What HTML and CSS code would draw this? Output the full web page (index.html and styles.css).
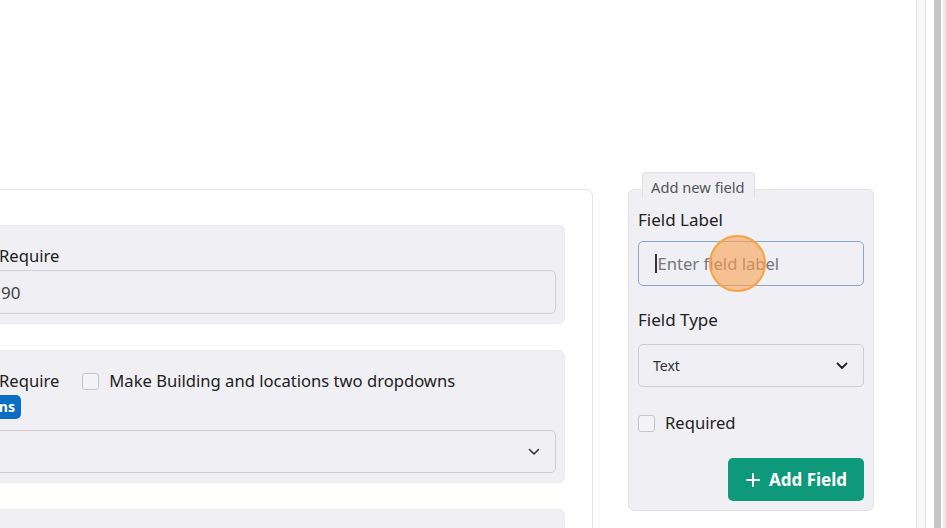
FILE: index.html
```html
<!DOCTYPE html>
<html lang="en">
<head>
  <meta charset="UTF-8" />
  <meta name="viewport" content="width=device-width, initial-scale=1.0" />
  <title>Form Builder</title>
  <link rel="stylesheet" href="styles.css">
</head>
<body>
  <div class="page">
    <div class="content">

      <!-- Existing fields -->
      <section class="fields">
        <div class="field-card">
          <label class="check-row">
            <span class="box"></span>
            <span>Require</span>
          </label>
          <div class="input">90</div>
        </div>

        <div class="field-card">
          <div class="check-row">
            <label class="check-row">
              <span class="box"></span>
              <span>Require</span>
            </label>
            <label class="check-row spaced">
              <span class="box"></span>
              <span>Make Building and locations two dropdowns</span>
            </label>
          </div>
          <div class="badge-row">
            <span class="badge">Edit Locations</span>
          </div>
          <div class="select wide">
            <span></span>
            <svg class="chevron" viewBox="0 0 12 8" width="12" height="8"><path d="M1.5 1.5 6 6l4.5-4.5" fill="none" stroke="#333" stroke-width="1.6" stroke-linecap="round" stroke-linejoin="round"/></svg>
          </div>
        </div>

        <div class="field-card"></div>
      </section>

      <!-- Add new field -->
      <aside class="new-field">
        <div class="tab">Add new field</div>
        <div class="panel">
          <div class="label">Field Label</div>
          <div class="input focused">
            <span class="caret"></span>
            <span class="placeholder">Enter field label</span>
            <span class="pointer"></span>
          </div>

          <div class="label type">Field Type</div>
          <div class="select">
            <span>Text</span>
            <svg class="chevron" viewBox="0 0 12 8" width="12" height="8"><path d="M1.5 1.5 6 6l4.5-4.5" fill="none" stroke="#222" stroke-width="1.8" stroke-linecap="round" stroke-linejoin="round"/></svg>
          </div>

          <label class="check-row required">
            <span class="box"></span>
            <span>Required</span>
          </label>

          <div class="actions">
            <button class="add-btn">
              <svg viewBox="0 0 14 14" width="14" height="14"><path d="M7 1v12M1 7h12" stroke="#fff" stroke-width="2" stroke-linecap="round"/></svg>
              Add Field
            </button>
          </div>
        </div>
      </aside>
    </div>

    <div class="gutter">
      <div class="track"></div>
      <div class="thumb"></div>
    </div>
  </div>
</body>
</html>
```

FILE: styles.css
```css
* {
  box-sizing: border-box;
}
body {
  margin: 0;
  background: #fff;
  color: #222;
  font-family: "Noto Sans", "Liberation Sans", sans-serif;
  overflow: hidden;
}
.page {
  display: flex;
  height: 528px;
}
.content {
  flex: 1;
  display: flex;
  align-items: flex-start;
  padding-top: 172px;
  overflow: hidden;
}

/* left column with the existing fields */
.fields {
  flex: none;
  width: 643px;
  margin-left: -50px;
  margin-top: 17px;
  padding: 35px 27px 0 12px;
  border: 1px solid #e4e4e9;
  border-radius: 7px;
  background: #fff;
  display: flex;
  flex-direction: column;
  gap: 26px;
  height: 400px;
}
.field-card {
  background: #f0f0f4;
  border: 1px solid #ebebf0;
  border-radius: 6px;
  padding: 19px 8px 9px 8px;
  min-height: 60px;
}
.check-row {
  display: flex;
  align-items: center;
  gap: 10px;
  font-size: 16.6px;
  line-height: 22px;
}
.check-row.spaced {
  margin-left: 13px;
}
.box {
  width: 17px;
  height: 17px;
  border: 1.5px solid #c4c4ca;
  border-radius: 3px;
  background: #f4f4f7;
  flex: none;
}
.input {
  margin-top: 3px;
  height: 44px;
  border: 1px solid #cfcfd6;
  border-radius: 5px;
  background: #efeff4;
  display: flex;
  align-items: center;
  padding-left: 28px;
  font-size: 17px;
  color: #444;
}
.badge-row {
  margin-top: 3px;
  height: 24px;
}
.badge {
  display: inline-block;
  margin-left: -63px;
  height: 24px;
  line-height: 24px;
  padding: 0 6px 0 8px;
  border-radius: 5px;
  background: #0b6fc1;
  color: #fff;
  font-weight: 700;
  font-size: 14px;
}
.select {
  height: 43px;
  border: 1px solid #cdcdd4;
  border-radius: 5px;
  background: #f0f0f4;
  display: flex;
  align-items: center;
  justify-content: space-between;
  padding: 0 15px 0 14px;
  font-size: 14px;
  color: #333;
}
.select.wide {
  margin-top: 11px;
  padding-right: 15px;
}

/* add new field panel */
.new-field {
  flex: none;
  width: 246px;
  margin-left: 35px;
}
.tab {
  position: relative;
  z-index: 1;
  width: fit-content;
  margin-left: 14px;
  margin-bottom: -9px;
  padding: 5px 9px 2px 8px;
  background: #efeff4;
  border: 1px solid #e0e0e6;
  border-bottom: 0;
  border-radius: 4px 4px 0 0;
  font-size: 14.7px;
  line-height: 18px;
  color: #555;
}
.panel {
  background: #efeff4;
  border: 1px solid #e0e0e6;
  border-radius: 6px;
  padding: 19px 9px 9px 9px;
}
.label {
  font-size: 17px;
  line-height: 22px;
  color: #222;
}
.label.type {
  margin-top: 23px;
}
.panel .input {
  position: relative;
  margin-top: 10px;
  height: 45px;
  border-color: #8aa6cb;
  border-width: 1.5px;
  padding-left: 16px;
  color: #777;
  font-size: 16.6px;
}
.caret {
  width: 1.5px;
  height: 19px;
  background: #333;
  margin-right: 1px;
}
.pointer {
  position: absolute;
  left: 70px;
  top: -7px;
  width: 57px;
  height: 57px;
  border-radius: 50%;
  border: 2px solid #f6a347;
  background: rgba(248, 160, 80, 0.6);
}
.panel .select {
  margin-top: 13px;
}
.required {
  margin-top: 25px;
}
.actions {
  display: flex;
  justify-content: flex-end;
  margin-top: 24px;
}
.add-btn {
  display: flex;
  align-items: center;
  gap: 9px;
  height: 43px;
  padding: 0 17px 0 18px;
  border: 0;
  border-radius: 5px;
  background: #0d997a;
  color: #fff;
  font-family: inherit;
  font-size: 17px;
  font-weight: 700;
}

/* scrollbar strip on the right */
.gutter {
  flex: none;
  width: 30px;
  display: flex;
  border-left: 1px solid #dedede;
}
.track {
  width: 9px;
  background: #f8f8f8;
  border-right: 1px solid #e4e4e4;
}
.thumb {
  width: 9px;
  margin-left: 8px;
  background: #c6c6c6;
  border-right: 2px solid #fff;
  box-shadow: 3px 0 0 #e8e8e8;
}
```
